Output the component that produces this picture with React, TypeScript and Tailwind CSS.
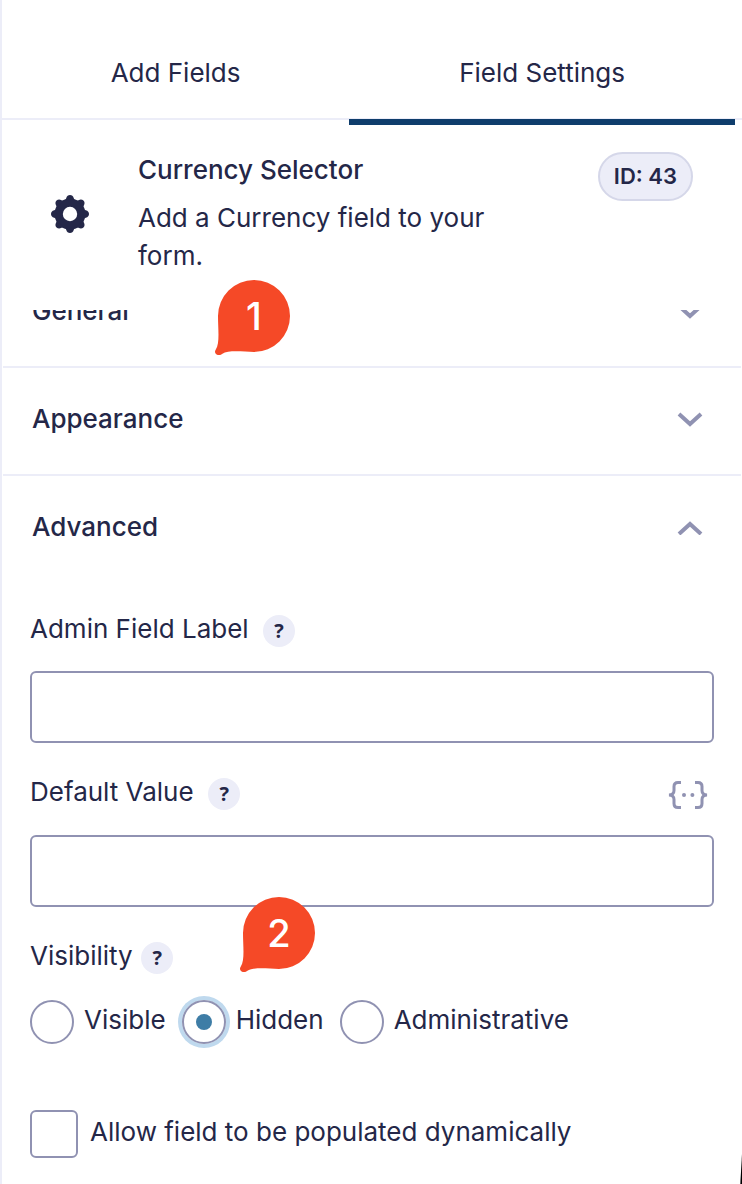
import { useState } from 'react';
import { clsx } from 'clsx';

type Visibility = 'visible' | 'hidden' | 'administrative';

const visibilityOptions: { value: Visibility; label: string }[] = [
    { value: 'visible', label: 'Visible' },
    { value: 'hidden', label: 'Hidden' },
    { value: 'administrative', label: 'Administrative' },
];

function GearIcon() {
    return (
        <svg viewBox="-19 -19 38 38" className="h-[38px] w-[38px] shrink-0" aria-hidden="true">
            <g fill="#242748">
                <circle r="15.4" />
                {[0, 45, 90, 135, 180, 225, 270, 315].map((angle) => (
                    <path
                        key={angle}
                        transform={`rotate(${angle})`}
                        d="M-5 -13.800 Q-4.200 -14.200 -3.800 -15.800 C-3.200 -18 -1.800 -19 0 -19 C1.800 -19 3.200 -18 3.800 -15.800 Q4.200 -14.200 5 -13.800 Z"
                    />
                ))}
            </g>
            <circle r="7.2" fill="#fff" />
        </svg>
    );
}

function Chevron({ up = false }: { up?: boolean }) {
    return (
        <svg viewBox="0 0 26 16" className="h-4 w-[26px] shrink-0" aria-hidden="true">
            <path
                d={up ? 'M2 15 L13 5 L24 15' : 'M2 3 L13 13 L24 3'}
                fill="none"
                stroke="#9092b2"
                strokeWidth="4"
            />
        </svg>
    );
}

function MergeTagIcon() {
    return (
        <svg viewBox="0 0 40 30" className="h-[30px] w-10" fill="none" stroke="#9092b2" strokeWidth="3" aria-hidden="true">
            <path d="M13 2.5 H10 Q6 2.5 6 6.5 V10.5 Q6 14.7 1 15 Q6 15.3 6 19.5 V23.5 Q6 27.5 10 27.5 H13" />
            <path d="M27 2.5 H30 Q34 2.5 34 6.5 V10.5 Q34 14.7 39 15 Q34 15.3 34 19.5 V23.5 Q34 27.5 30 27.5 H27" />
            <circle cx="16" cy="15" r="2" fill="#9092b2" stroke="none" />
            <circle cx="24.4" cy="15" r="2" fill="#9092b2" stroke="none" />
        </svg>
    );
}

function HelpButton({ topic }: { topic: string }) {
    return (
        <button
            type="button"
            aria-label={`Help: ${topic}`}
            className="flex h-8 w-8 shrink-0 items-center justify-center rounded-full bg-[#ecedf8] pl-px font-['Open_Sans',sans-serif] text-[20px] font-bold leading-none"
        >
            ?
        </button>
    );
}

// Numbered marker that floats over the panel
function Pin({ label, className }: { label: string; className: string }) {
    return (
        <div className={clsx('pointer-events-none absolute h-[76px] w-[76px]', className)}>
            <svg viewBox="0 0 76 76" className="absolute inset-0" aria-hidden="true">
                <path
                    fill="#f54927"
                    d="M40 1 A36 36 0 0 1 40 73 C30 73 15 70.500 8 75 C4 78 -1 74.500 1.800 70.500 C6 64 4 50 4 37 A36 36 0 0 1 40 1 Z"
                />
            </svg>
            <span className="relative flex h-[74px] items-center justify-center pl-1 text-[38px] font-medium text-white">
                {label}
            </span>
        </div>
    );
}

function AccordionHeader({ title, open = false }: { title: string; open?: boolean }) {
    return (
        <h3 className="mx-px">
            <button
                type="button"
                aria-expanded={open}
                className={clsx(
                    'flex h-[108px] w-full items-center justify-between border-b-2 pb-1 pl-[29px] pr-[38px] font-medium',
                    open ? 'border-transparent' : 'border-[#ecedf8]'
                )}
            >
                {title}
                <Chevron up={open} />
            </button>
        </h3>
    );
}

export default function App() {
    const [visibility, setVisibility] = useState<Visibility>('hidden');

    return (
        <div className="relative min-h-screen overflow-hidden border-l-2 border-[#ecedf8] bg-white font-['Inter',sans-serif] text-[26px] leading-7 text-[#242748]">
            <div role="tablist" className="flex h-[120px] border-b-2 border-[#ecedf8] pr-[7px]">
                <button type="button" role="tab" aria-selected="false" className="flex-[9] pt-7">
                    Add Fields
                </button>
                <button type="button" role="tab" aria-selected="true" className="relative flex-[10] pt-7">
                    Field Settings
                    <span className="absolute inset-x-0 -bottom-[7px] h-1.5 bg-[#0f3d6c]" />
                </button>
            </div>

            <header className="flex h-[190px] items-start pl-[49px] pr-[49px] pt-8">
                <div className="pt-[43px]">
                    <GearIcon />
                </div>
                <div className="ml-[49px] flex-1 pt-1">
                    <h2 className="font-medium">Currency Selector</h2>
                    <p className="mt-[15px] max-w-[380px] leading-[38px]">Add a Currency field to your form.</p>
                </div>
                <span className="flex h-[49px] items-center rounded-full border-2 border-[#d5d7e9] bg-[#ecedf8] px-[14px] pb-0.5 text-[22px] font-semibold">
                    ID: 43
                </span>
            </header>

            {/* Scrolled list of sections, the first one is partly out of view */}
            <div className="overflow-hidden">
                <div className="-mt-[50px]">
                    <AccordionHeader title="General" />
                    <AccordionHeader title="Appearance" />
                    <AccordionHeader title="Advanced" open />

                    <div className="px-7 pb-6 pt-[31px]">
                        <div className="flex items-start gap-3.5">
                            <label htmlFor="admin-label">Admin Field Label</label>
                            <HelpButton topic="Admin Field Label" />
                        </div>
                        <input
                            id="admin-label"
                            type="text"
                            className="mt-6 block h-[72px] w-full rounded-md border-2 border-[#9092b2] px-4 outline-none"
                        />

                        <div className="mt-[35px] flex items-start gap-3.5">
                            <label htmlFor="default-value">Default Value</label>
                            <HelpButton topic="Default Value" />
                            <button type="button" aria-label="Insert merge tag" className="ml-auto mr-1.5 pt-0.5">
                                <MergeTagIcon />
                            </button>
                        </div>
                        <input
                            id="default-value"
                            type="text"
                            className="mt-[25px] block h-[72px] w-full rounded-md border-2 border-[#9092b2] px-4 outline-none"
                        />

                        <fieldset className="pt-[35px]">
                            <legend className="float-left flex w-full items-start gap-2">
                                Visibility
                                <HelpButton topic="Visibility" />
                            </legend>
                            <div className="clear-both flex gap-4 pt-[26px]">
                                {visibilityOptions.map(({ value, label }) => (
                                    <label key={value} className="flex items-center gap-2.5">
                                        <input
                                            type="radio"
                                            name="visibility"
                                            value={value}
                                            checked={visibility === value}
                                            onChange={() => setVisibility(value)}
                                            className="flex h-11 w-11 shrink-0 appearance-none items-center justify-center rounded-full border-2 border-[#9092b2] before:h-4 before:w-4 before:rounded-full checked:shadow-[0_0_0_4px_#bfd9ee] checked:before:bg-[#3e7da6]"
                                        />
                                        <span className="pb-1">{label}</span>
                                    </label>
                                ))}
                            </div>
                        </fieldset>

                        <label className="mt-[66px] flex items-center gap-3">
                            <input
                                type="checkbox"
                                className="h-12 w-12 shrink-0 appearance-none rounded-md border-2 border-[#9092b2] checked:bg-[#3e7da6]"
                            />
                            <span className="pb-1">Allow field to be populated dynamically</span>
                        </label>
                    </div>
                </div>
            </div>

            <Pin label="1" className="left-[212px] top-[279px]" />
            <Pin label="2" className="left-[237px] top-[896px]" />

            <svg viewBox="0 0 2 30" className="absolute bottom-0 right-0 h-[30px] w-0.5" aria-hidden="true">
                <path d="M2 0 L2 30 L0.300 30 Z" fill="#000" />
            </svg>
        </div>
    );
}
